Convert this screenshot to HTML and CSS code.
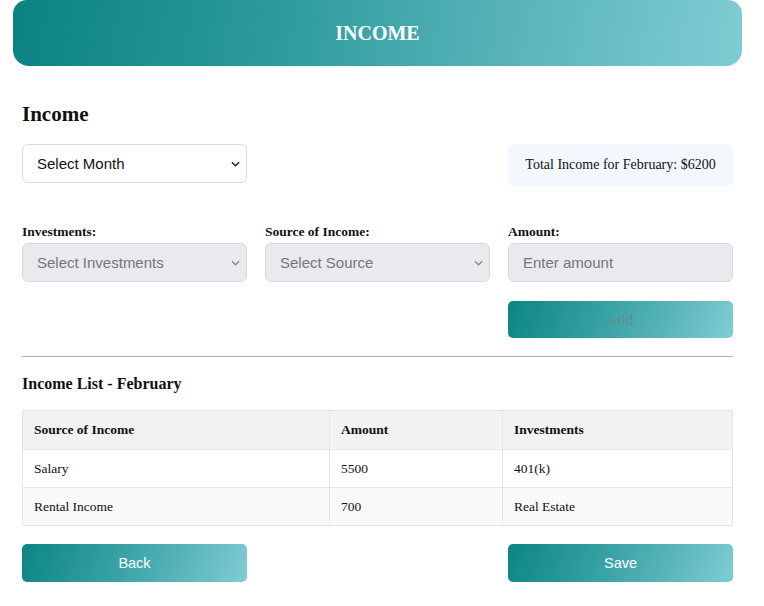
FILE: index.html
```html
<!DOCTYPE html>
<html>
<head>
<meta charset="utf-8">
<link rel="stylesheet" href="styles.css">
</head>
<body>
<header class="banner"><h1>INCOME</h1></header>
<main class="page">
  <h2 class="title">Income</h2>
  <div class="top-row">
    <div class="select white"><span>Select Month</span><svg viewBox="0 0 10 6" class="chev"><path d="M1 1l4 4 4-4" fill="none" stroke="#222" stroke-width="1.6"/></svg></div>
    <div class="total">Total Income for February: $6200</div>
  </div>
  <div class="form-grid">
    <div class="field">
      <label>Investments:</label>
      <div class="select grey"><span>Select Investments</span><svg viewBox="0 0 10 6" class="chev"><path d="M1 1l4 4 4-4" fill="none" stroke="#888" stroke-width="1.4"/></svg></div>
    </div>
    <div class="field">
      <label>Source of Income:</label>
      <div class="select grey"><span>Select Source</span><svg viewBox="0 0 10 6" class="chev"><path d="M1 1l4 4 4-4" fill="none" stroke="#888" stroke-width="1.4"/></svg></div>
    </div>
    <div class="field">
      <label>Amount:</label>
      <div class="select grey"><span>Enter amount</span></div>
    </div>
    <div></div><div></div>
    <button class="btn add">Add</button>
  </div>
  <hr class="rule">
  <h3 class="list-title">Income List - February</h3>
  <table class="tbl">
    <thead><tr><th class="c1">Source of Income</th><th class="c2">Amount</th><th>Investments</th></tr></thead>
    <tbody>
      <tr><td>Salary</td><td>5500</td><td>401(k)</td></tr>
      <tr class="alt"><td>Rental Income</td><td>700</td><td>Real Estate</td></tr>
    </tbody>
  </table>
  <div class="actions">
    <button class="btn">Back</button>
    <button class="btn">Save</button>
  </div>
</main>
</body>
</html>
```
FILE: styles.css
```css
* { box-sizing: border-box; }
body {
  margin: 0;
  background: #fff;
  font-family: "Liberation Serif", "Times New Roman", serif;
  color: #111;
}
.banner {
  margin: 0 22px 0 13px;
  height: 66px;
  border-radius: 14px 14px 16px 16px;
  background: linear-gradient(100deg, #0b8282 0%, #2b9a9c 35%, #5bb5bb 70%, #7ecdd3 100%);
  display: flex;
  align-items: center;
  justify-content: center;
}
.banner h1 {
  margin: 0;
  color: #fff;
  font-size: 20px;
  font-weight: bold;
  letter-spacing: 0;
}
.page {
  margin: 0 31px 0 22px;
  padding-top: 36px;
}
.title {
  margin: 0 0 18px;
  font-size: 21px;
  font-weight: bold;
  line-height: 24px;
}
.top-row {
  display: flex;
  justify-content: space-between;
  align-items: flex-start;
}
.select {
  height: 39px;
  border-radius: 6px;
  border: 1px solid #d9dadd;
  display: flex;
  align-items: center;
  justify-content: space-between;
  padding: 0 6px 0 14px;
  font-family: "Liberation Sans", Arial, sans-serif;
  font-size: 15px;
}
.select.white { width: 225px; background: #fff; color: #111; height: 39px; }
.select.grey { background: #e9eaed; color: #767676; }
.chev { width: 9px; height: 6px; }
.total {
  width: 225px;
  height: 42px;
  background: #f2f8fd;
  border-radius: 6px;
  display: flex;
  align-items: center;
  justify-content: center;
  font-size: 14px;
}
.form-grid {
  margin-top: 38px;
  display: grid;
  grid-template-columns: 225px 225px 225px;
  column-gap: 18px;
  row-gap: 19px;
}
.field label {
  display: block;
  font-size: 13.5px;
  font-weight: bold;
  line-height: 16px;
  margin-bottom: 3px;
}
.btn {
  height: 38px;
  border: none;
  border-radius: 5px;
  background: linear-gradient(110deg, #0c8585 0%, #3aa3a6 45%, #5fb8bd 75%, #7fcdd3 100%);
  color: #fff;
  font-family: "Liberation Sans", Arial, sans-serif;
  font-size: 14.5px;
  width: 225px;
  padding: 0;
}
.btn.add { color: #5f8f96; height: 37px; }
.rule {
  margin: 18px 0 0;
  border: none;
  border-top: 1px solid #b0b0b0;
}
.list-title {
  margin: 17px 0 16px;
  font-size: 16px;
  font-weight: bold;
  line-height: 20px;
}
.tbl {
  width: 100%;
  border-collapse: collapse;
  font-size: 13.5px;
}
.tbl th, .tbl td {
  text-align: left;
  padding: 0 11px;
  height: 38px;
  border: 1px solid #e6e6e6;
}
.tbl th { background: #f2f2f2; font-weight: bold; height: 39px; }
.tbl .c1 { width: 307px; }
.tbl .c2 { width: 173px; }
.tbl tr.alt td { background: #f9f9fa; }
.actions {
  margin-top: 18px;
  display: flex;
  justify-content: space-between;
}
```
